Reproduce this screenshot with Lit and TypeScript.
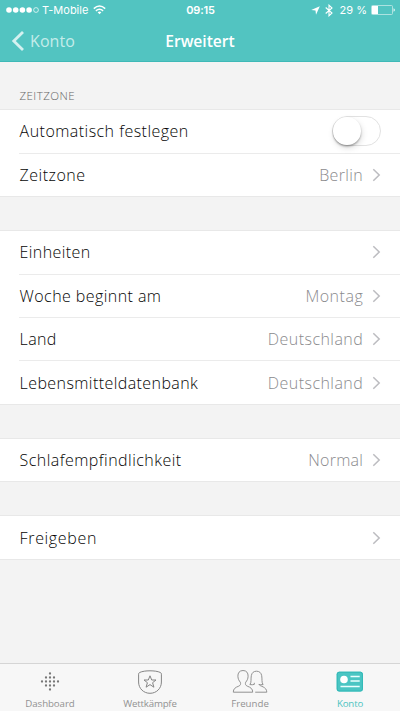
import { LitElement, html, svg, css, nothing } from "lit";

interface Row {
  label: string;
  track: number;
  value?: string;
  valueTrack?: number;
  toggle?: boolean;
}

interface Group {
  title?: string;
  rows: Row[];
}

const GROUPS: Group[] = [
  {
    title: "ZEITZONE",
    rows: [
      { label: "Automatisch festlegen", track: 0.46, toggle: true },
      { label: "Zeitzone", track: 0.5, value: "Berlin", valueTrack: 0.38 },
    ],
  },
  {
    rows: [
      { label: "Einheiten", track: 0.4 },
      { label: "Woche beginnt am", track: 0.43, value: "Montag", valueTrack: 0.5 },
      { label: "Land", track: 0.35, value: "Deutschland", valueTrack: 0.45 },
      { label: "Lebensmitteldatenbank", track: 0.42, value: "Deutschland", valueTrack: 0.45 },
    ],
  },
  { rows: [{ label: "Schlafempfindlichkeit", track: 0.46, value: "Normal", valueTrack: 0.25 }] },
  { rows: [{ label: "Freigeben", track: 0.65 }] },
];

const DOTS = [
  [10, 1.5], [6, 5.5], [10, 5.5], [14, 5.5],
  [2, 9.5], [6, 9.5], [10, 9.5], [14, 9.5], [18, 9.5],
  [6, 13.5], [10, 13.5], [14, 13.5], [10, 17.5],
];

const dashboardIcon = html`<svg width="20" height="20" viewBox="0 0 20 20">
  ${DOTS.map(([x, y]) => svg`<circle cx=${x} cy=${y} r="1.15" fill="#777"/>`)}
</svg>`;

const shieldIcon = html`<svg width="26" height="26" viewBox="0 0 26 26" fill="none" stroke="#858585" stroke-width="1">
  <path d="M13 1.8C9 1.8 5.2 2.3 2.6 3.5Q1.6 4 1.6 5.2V13C1.6 19.5 6.6 24.3 13 24.3S24.4 19.5 24.4 13V5.2Q24.4 4 23.4 3.5C20.8 2.3 17 1.8 13 1.8Z"/>
  <path stroke-linejoin="round" d="M13 6.8L14.7 11H19L15.6 13.7L16.9 18.2L13 15.6L9.1 18.2L10.4 13.7L7 11H11.3Z"/>
</svg>`;

const friendsIcon = html`<svg width="36" height="26" viewBox="0 0 36 26" fill="none" stroke="#929292" stroke-width="1" stroke-linejoin="round">
  <path d="M11 1.5C7.4 1.5 5.8 4 5.9 7.2C6 10 7 11.7 8.3 13.2C9 15.3 8.4 16.3 6.8 17.1C3.2 18.5 1.3 19.8 1.3 23.2H20.7C20.7 19.8 18.8 18.5 15.2 17.1C13.6 16.3 13 15.3 13.7 13.2C15 11.7 16 10 16.1 7.2C16.2 4 14.6 1.5 11 1.5Z"/>
  <path d="M17.9 15.6C19.6 13.5 18.7 9.8 19.3 6.7C19.8 3.7 21.8 2.2 24.5 2.2S29.2 3.7 29.7 6.7C30.3 9.8 29.4 13.5 31.1 15.6C29.3 15.9 28 15.8 26.9 15.4C27.8 17.6 34.7 17.3 34.8 23.2H23.2M17.9 15.6C19.7 15.9 21 15.8 22.3 15.4V13.8"/>
</svg>`;

const accountIcon = html`<svg width="28" height="22" viewBox="0 0 28 22">
  <rect x=".7" y=".7" width="26.2" height="19.8" rx="2.5" fill="#4ac5c3"/>
  <rect x="1.2" y="1.2" width="25.2" height="18.8" rx="2" fill="none" stroke="#30b8b7" stroke-width="1"/>
  <circle cx="8" cy="8.5" r="3.8" fill="#fff"/>
  <path d="M14.5 5.5H23.7M14.5 10H23.7M4.5 15.5H23.7" stroke="#e9fffe" stroke-width="1.4"/>
</svg>`;

const TABS = [
  { name: "Dashboard", icon: dashboardIcon, track: -0.08 },
  { name: "Wettkämpfe", icon: shieldIcon, track: -0.2 },
  { name: "Freunde", icon: friendsIcon, track: 0 },
  { name: "Konto", icon: accountIcon, track: -0.15, active: true },
];

const chevron = html`<svg class="chevron" width="9" height="14" viewBox="0 0 9 14" fill="none">
  <path d="M1.3 1.2L7.2 7L1.3 12.8" stroke="#bcbcc0" stroke-width="1.5"/>
</svg>`;

class AppRoot extends LitElement {
  static styles = css`
    :host {
      display: flex;
      flex-direction: column;
      height: 711px;
      background: #f3f3f3;
      font-family: "Open Sans", "Liberation Sans", sans-serif;
      color: #050505;
      overflow: hidden;
    }
    * { box-sizing: border-box; }
    svg { display: block; flex: none; }
    header {
      height: 61.5px;
      flex: none;
      background: #52c4c1;
      color: #fff;
      border-bottom: 1px solid #3fb9b7;
    }
    .status, .nav {
      display: grid;
      grid-template-columns: 1fr auto 1fr;
      align-items: center;
    }
    .status {
      height: 20px;
      padding: 0 5px 0 6px;
      font: 11px/20px Inter, sans-serif;
    }
    .side { display: flex; align-items: center; }
    .end { justify-content: flex-end; }
    .carrier { margin: 0 5px 0 3px; }
    .clock { font-weight: 600; letter-spacing: -0.2px; }
    .bluetooth { margin-left: 5px; }
    .percent { margin: 0 4px 0 6.5px; }
    .nav { height: 41px; padding: 0 11px; }
    .back {
      display: flex;
      align-items: center;
      gap: 6px;
      font-size: 16px;
      font-weight: 400;
      letter-spacing: 0.1px;
      color: #c5ecea;
    }
    .title { font-size: 15.6px; font-weight: 600; }
    main { flex: 1; }
    .caption {
      height: 47.6px;
      padding: 26.4px 19.5px 0;
      font-size: 11.5px;
      line-height: 16px;
      letter-spacing: 0.45px;
      color: #666;
      font-weight: 350;
    }
    .group {
      background: #fff;
      border-top: 1px solid #e8e8e8;
      border-bottom: 1px solid #e8e8e8;
      margin-bottom: 32.9px;
    }
    .row {
      display: flex;
      align-items: center;
      height: 43.45px;
      margin-left: 19px;
      padding: 0 19px 0 0.6px;
      font-size: 16px;
      font-weight: 350;
      white-space: nowrap;
    }
    .row:first-child { height: 42.6px; }
    .row + .row { border-top: 1px solid #ebebeb; }
    .value { margin-left: auto; color: #8a8a8d; }
    .chevron { margin-left: 8.8px; }
    .label:only-of-type + .chevron { margin-left: auto; }
    .switch {
      width: 49px;
      height: 30px;
      margin-left: auto;
      border: 1.4px solid #e2e2e2;
      border-radius: 15px;
      background: #fff;
    }
    .knob {
      width: 27.5px;
      height: 27.5px;
      border-radius: 50%;
      background: #fff;
      box-shadow: 0 1.5px 2px rgba(0, 0, 0, 0.3), 1px 3px 6px rgba(0, 0, 0, 0.13);
    }
    footer {
      height: 48px;
      flex: none;
      display: grid;
      grid-template-columns: repeat(4, 1fr);
      background: #f7f7f7;
      border-top: 1px solid #d5d5d5;
    }
    .tab {
      display: flex;
      flex-direction: column;
      align-items: center;
      color: #929292;
      font-size: 9.7px;
      line-height: 12px;
    }
    .glyph { height: 34px; display: flex; align-items: center; padding-top: 2px; }
    .active { color: #4dc3c1; }
  `;

  renderRow(r: Row) {
    return html`<div class="row">
      <span class="label" style="letter-spacing:${r.track}px">${r.label}</span>
      ${r.value ? html`<span class="value" style="letter-spacing:${r.valueTrack}px">${r.value}</span>` : nothing}
      ${r.toggle ? html`<div class="switch"><div class="knob"></div></div>` : chevron}
    </div>`;
  }

  render() {
    return html`
      <header>
        <div class="status">
          <div class="side">
            <svg width="33" height="8" viewBox="0 0 33 8" fill="#fff">
              <circle cx="3" cy="4" r="2.8"/><circle cx="9.7" cy="4" r="2.8"/>
              <circle cx="16.4" cy="4" r="2.8"/><circle cx="23.1" cy="4" r="2.8"/>
              <circle cx="30" cy="4" r="2.4" fill="none" stroke="#fff" stroke-width=".7"/>
            </svg>
            <span class="carrier">T-Mobile</span>
            <svg width="13" height="10" viewBox="0 0 13 10" fill="none" stroke="#fff" stroke-width="1.5">
              <path d="M.8 3.6Q6.5-1.6 12.2 3.6M2.9 5.9Q6.5 2.7 10.1 5.9"/>
              <path d="M4.6 7.2Q6.5 5.8 8.4 7.2L6.5 9.2Z" fill="#fff" stroke="none"/>
            </svg>
          </div>
          <span class="clock">09:15</span>
          <div class="side end">
            <svg width="9" height="9" viewBox="0 0 9 9" fill="#fff"><path d="M8.8.2L5 8.8L4.5 4.5L.2 4Z"/></svg>
            <svg class="bluetooth" width="8" height="13" viewBox="0 0 8 13" fill="none" stroke="#fff" stroke-width="1.1">
              <path d="M.7 3.5L7 9L4 11.8V1.2L7 4L.7 9.5"/>
            </svg>
            <span class="percent">29 %</span>
            <svg width="24" height="10" viewBox="0 0 24 10">
              <rect x=".5" y=".5" width="21" height="9" rx="1" fill="none" stroke="#c4eae9" stroke-width=".8"/>
              <rect x="1" y="1" width="6" height="8" fill="#fff"/>
              <path d="M22.5 3.2Q24 4 24 5T22.5 6.8Z" fill="#d9f2f1"/>
            </svg>
          </div>
        </div>
        <div class="nav">
          <div class="back">
            <svg width="13" height="20" viewBox="0 0 13 20" fill="none" stroke="#d4f1f0" stroke-width="2.8">
              <path d="M12 1L2.8 10L12 19"/>
            </svg>
            <span>Konto</span>
          </div>
          <span class="title">Erweitert</span>
        </div>
      </header>
      <main>
        ${GROUPS.map((g) => html`
          ${g.title ? html`<div class="caption">${g.title}</div>` : nothing}
          <div class="group">${g.rows.map((r) => this.renderRow(r))}</div>
        `)}
      </main>
      <footer>
        ${TABS.map((t) => html`<div class="tab ${t.active ? "active" : ""}">
          <div class="glyph">${t.icon}</div>
          <span style="letter-spacing:${t.track}px">${t.name}</span>
        </div>`)}
      </footer>
    `;
  }
}

customElements.define("app-root", AppRoot);
